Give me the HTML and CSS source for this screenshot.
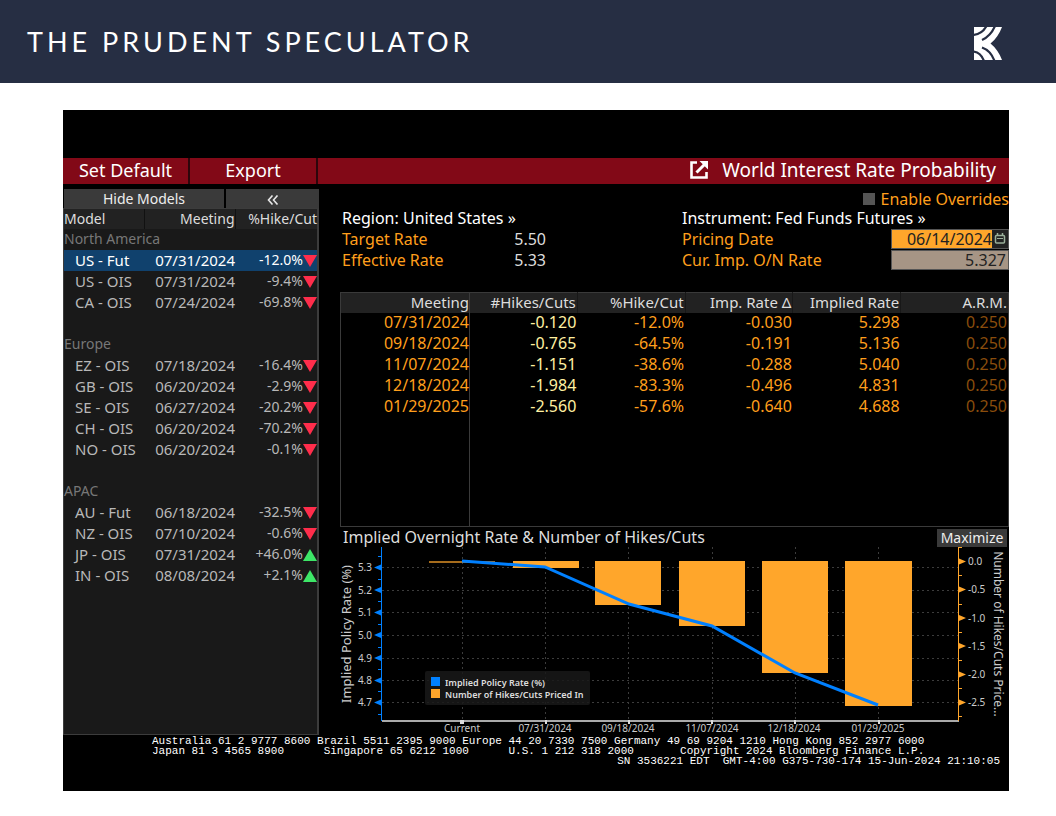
FILE: index.html
```html
<!DOCTYPE html>
<html lang="en">
<head>
<meta charset="utf-8">
<title>The Prudent Speculator</title>
<link rel="stylesheet" href="styles.css">
</head>
<body>
<header class="masthead">
  <h1 class="masthead-title">THE PRUDENT SPECULATOR</h1>
  <svg class="logo" viewBox="0 0 28 33" role="img" aria-label="Kovitz">
    <path fill="#fff" d="M0 0H28C25.500 6.500 22 12 16.500 16.500C22 21 25.500 26.500 28 33H0Z"/>
    <g fill="none" stroke="#262e43" stroke-width="2.200">
      <path d="M-1 8C5 7.500 9.500 4.500 12.500-1"/>
      <path d="M8 13C13.500 10.500 18 6 21-1"/>
      <path d="M-1 24.500C4 25 8 28.500 10 34"/>
      <path d="M8 20.500C13.500 22.500 18 27 20.500 34"/>
    </g>
  </svg>
</header>
<main class="terminal">
  <nav class="toolbar">
    <button class="tool tool-default">Set Default</button>
    <button class="tool tool-export">Export</button>
    <div class="tool-title">
      <svg class="popout" viewBox="0 0 18 18" aria-hidden="true"><path d="M7 1.500H1.500V16.500H16.500V11" fill="none" stroke="#fff" stroke-width="2.600"/><path d="M6.500 11.500L15 3" stroke="#fff" stroke-width="3"/><path d="M9.500 0H18V8.500Z" fill="#fff"/></svg>
      <h2>World Interest Rate Probability</h2>
    </div>
  </nav>
  <div class="workspace">
    <aside class="models">
      <div class="models-actions">
        <button class="hide-models">Hide Models</button>
        <button class="collapse" aria-label="Collapse"><svg viewBox="0 0 12 10" aria-hidden="true"><path d="M5.500 0.500L1.500 5L5.500 9.500M10.500 0.500L6.500 5L10.500 9.500" fill="none" stroke="#e6e6e6" stroke-width="1.600"/></svg></button>
      </div>
      <div class="models-list">
        <table class="models-table">
          <colgroup><col class="c-model"><col class="c-date"><col class="c-pct"><col class="c-dir"></colgroup>
          <thead><tr><th>Model</th><th>Meeting</th><th colspan="2">%Hike/Cut</th></tr></thead>
          <tbody>
            <tr class="group"><th colspan="4">North America</th></tr>
            <tr class="selected"><td>US - Fut</td><td>07/31/2024</td><td>-12.0%</td><td><i class="down"></i></td></tr>
            <tr><td>US - OIS</td><td>07/31/2024</td><td>-9.4%</td><td><i class="down"></i></td></tr>
            <tr><td>CA - OIS</td><td>07/24/2024</td><td>-69.8%</td><td><i class="down"></i></td></tr>
            <tr><td colspan="4"></td></tr>
            <tr class="group"><th colspan="4">Europe</th></tr>
            <tr><td>EZ - OIS</td><td>07/18/2024</td><td>-16.4%</td><td><i class="down"></i></td></tr>
            <tr><td>GB - OIS</td><td>06/20/2024</td><td>-2.9%</td><td><i class="down"></i></td></tr>
            <tr><td>SE - OIS</td><td>06/27/2024</td><td>-20.2%</td><td><i class="down"></i></td></tr>
            <tr><td>CH - OIS</td><td>06/20/2024</td><td>-70.2%</td><td><i class="down"></i></td></tr>
            <tr><td>NO - OIS</td><td>06/20/2024</td><td>-0.1%</td><td><i class="down"></i></td></tr>
            <tr><td colspan="4"></td></tr>
            <tr class="group"><th colspan="4">APAC</th></tr>
            <tr><td>AU - Fut</td><td>06/18/2024</td><td>-32.5%</td><td><i class="down"></i></td></tr>
            <tr><td>NZ - OIS</td><td>07/10/2024</td><td>-0.6%</td><td><i class="down"></i></td></tr>
            <tr><td>JP - OIS</td><td>07/31/2024</td><td>+46.0%</td><td><i class="up"></i></td></tr>
            <tr><td>IN - OIS</td><td>08/08/2024</td><td>+2.1%</td><td><i class="up"></i></td></tr>
          </tbody>
        </table>
      </div>
    </aside>
    <section class="detail">
      <div class="overrides"><input type="checkbox" id="overrides"><label for="overrides">Enable Overrides</label></div>
      <div class="info">
        <div class="info-block">
          <button class="picker">Region: United States »</button>
          <div class="fact"><span>Target Rate</span><output>5.50</output></div>
          <div class="fact"><span>Effective Rate</span><output>5.33</output></div>
        </div>
        <div class="info-block">
          <button class="picker">Instrument: Fed Funds Futures »</button>
          <div class="field"><label for="pricing">Pricing Date</label>
            <span class="control"><input class="date" id="pricing" type="text" value="06/14/2024"><button class="calendar" aria-label="Choose date"><svg viewBox="0 0 12 14" aria-hidden="true"><path d="M3.500 1V4M8.500 1V4" stroke="#9ab09a" stroke-width="1.500"/><rect x="1.500" y="3.500" width="9" height="7.500" rx="1" fill="#222" stroke="#9ab09a" stroke-width="1.500"/><path d="M3 6.500H9" stroke="#9ab09a"/></svg></button></span></div>
          <div class="field"><label for="rate">Cur. Imp. O/N Rate</label>
            <span class="control"><input class="rate" id="rate" type="text" value="5.327" readonly></span></div>
        </div>
      </div>
      <table class="meetings">
        <thead><tr><th>Meeting</th><th>#Hikes/Cuts</th><th>%Hike/Cut</th><th>Imp. Rate Δ</th><th>Implied Rate</th><th>A.R.M.</th></tr></thead>
        <tbody>
          <tr><td>07/31/2024</td><td>-0.120</td><td>-12.0%</td><td>-0.030</td><td>5.298</td><td>0.250</td></tr>
          <tr><td>09/18/2024</td><td>-0.765</td><td>-64.5%</td><td>-0.191</td><td>5.136</td><td>0.250</td></tr>
          <tr><td>11/07/2024</td><td>-1.151</td><td>-38.6%</td><td>-0.288</td><td>5.040</td><td>0.250</td></tr>
          <tr><td>12/18/2024</td><td>-1.984</td><td>-83.3%</td><td>-0.496</td><td>4.831</td><td>0.250</td></tr>
          <tr><td>01/29/2025</td><td>-2.560</td><td>-57.6%</td><td>-0.640</td><td>4.688</td><td>0.250</td></tr>
          <tr class="filler"><td></td><td></td><td></td><td></td><td></td><td></td></tr>
        </tbody>
      </table>
      <div class="chart-head"><h3>Implied Overnight Rate &amp; Number of Hikes/Cuts</h3><button class="maximize">Maximize</button></div>
      <svg class="chart" viewBox="340 547 669 188" role="img" aria-label="Implied policy rate and number of hikes or cuts by meeting">
        <path class="grid" d="M382 567.500H958M382 590.500H958M382 612.500H958M382 635.500H958M382 658.500H958M382 680.500H958M382 702.500H958M462.500 547V720M545.500 547V720M628.500 547V720M712.500 547V720M795.500 547V720M878.500 547V720"/>
        <g class="bars">
          <rect x="429" y="561" width="66" height="2" opacity=".65"/>
          <rect x="513" y="561" width="66" height="7"/>
          <rect x="595" y="561" width="66" height="44"/>
          <rect x="679" y="561" width="66" height="65"/>
          <rect x="762" y="561" width="66" height="112"/>
          <rect x="845" y="561" width="67" height="145"/>
        </g>
        <rect x="425" y="671" width="165" height="34" rx="2" fill="#191919" fill-opacity=".85"/>
        <rect x="431" y="677" width="9" height="9" fill="#0080ff"/>
        <rect x="431" y="689" width="9" height="9" fill="#ffa62b"/>
        <text class="legend" x="445" y="686">Implied Policy Rate (%)</text>
        <text class="legend" x="445" y="698">Number of Hikes/Cuts Priced In</text>
        <path class="trend" d="M462 561L545 567L629 604L712 626L795 673L878 705"/>
        <path d="M382 721H959" stroke="#aaa" stroke-width="2"/>
        <path d="M460 720h4v4h-4zM545 720h2v4h-2zM628 720h2v4h-2zM711 720h2v4h-2zM794 720h2v4h-2zM878 720h2v4h-2z" fill="#ddd"/>
        <path d="M381.500 547V721M378 556.500h3M378 579.500h3M378 601.500h3M378 624.500h3M378 647.500h3M378 669.500h3M378 691.500h3M378 714.500h3" stroke="#0080ff" fill="none"/>
        <path d="M374 567.500l7-3v6zM374 590l7-3v6zM374 612.500l7-3v6zM374 635l7-3v6zM374 658l7-3v6zM374 680.500l7-3v6zM374 702.500l7-3v6z" fill="#0080ff"/>
        <path d="M958.500 547V721M959 547.500h3M959 575.500h3M959 604.500h3M959 632.500h3M959 660.500h3M959 688.500h3M959 716.500h3" stroke="#ffa62b" fill="none"/>
        <path d="M966 561.500l-7-3v6zM966 589.500l-7-3v6zM966 618l-7-3v6zM966 646l-7-3v6zM966 674.500l-7-3v6zM966 702.500l-7-3v6z" fill="#ffa62b"/>
        <g class="tick end"><text x="372" y="571">5.3</text><text x="372" y="594">5.2</text><text x="372" y="616">5.1</text><text x="372" y="639">5.0</text><text x="372" y="662">4.9</text><text x="372" y="684">4.8</text><text x="372" y="706">4.7</text></g>
        <g class="tick"><text x="968" y="565">0.0</text><text x="968" y="593">-0.5</text><text x="968" y="622">-1.0</text><text x="968" y="650">-1.5</text><text x="968" y="678">-2.0</text><text x="968" y="706">-2.5</text></g>
        <g class="tick mid"><text x="462" y="732">Current</text><text x="545" y="732">07/31/2024</text><text x="628" y="732">09/18/2024</text><text x="712" y="732">11/07/2024</text><text x="794" y="732">12/18/2024</text><text x="878" y="732">01/29/2025</text></g>
        <text class="axis axis-rate" transform="translate(351 634) rotate(-90)">Implied Policy Rate (%)</text>
        <text class="axis" transform="translate(994 634) rotate(90)">Number of Hikes/Cuts Price...</text>
      </svg>
    </section>
  </div>
  <footer class="contacts">
    <pre>Australia 61 2 9777 8600 Brazil 5511 2395 9000 Europe 44 20 7330 7500 Germany 49 69 9204 1210 Hong Kong 852 2977 6000
Japan 81 3 4565 8900      Singapore 65 6212 1000      U.S. 1 212 318 2000       Copyright 2024 Bloomberg Finance L.P.</pre>
    <pre class="serial">SN 3536221 EDT  GMT-4:00 G375-730-174 15-Jun-2024 21:10:05</pre>
  </footer>
</main>
</body>
</html>
```
FILE: styles.css
```css
* { box-sizing: border-box; }
body { margin: 0; background: #fff; font-family: "Noto Sans", sans-serif; font-size: 15px; }
h1, h2, h3, pre { margin: 0; font-weight: 400; }
button, input { font: inherit; color: inherit; border: 0; border-radius: 0; padding: 0; margin: 0; background: none; }
table { border-collapse: collapse; border-spacing: 0; table-layout: fixed; width: 100%; }
th, td { padding: 0; font-weight: 400; }

.masthead { display: flex; align-items: center; justify-content: space-between; height: 83px; padding: 0 54px 0 27px; background: #262e43; }
.masthead-title { font-family: Lato, sans-serif; font-size: 27px; line-height: 34px; letter-spacing: 4px; color: #fff; }
.logo { width: 28px; height: 33px; margin-top: 4px; }

.terminal { margin: 27px 47px 25px 63px; padding: 48px 0 25px; background: #000; color: #ddd; }
.toolbar { display: flex; height: 26px; background: #820917; color: #fff; }
.tool { padding-bottom: 2px; border-right: 2px solid #2c060b; font-size: 18px; line-height: 24px; }
.tool-default { width: 127px; }
.tool-export { width: 128px; }
.tool-title { flex: 1; display: flex; justify-content: flex-end; align-items: center; gap: 14px; padding: 0 13px 2px 0; }
.tool-title h2 { font-size: 19px; line-height: 24px; }
.popout { width: 18px; height: 18px; }

.workspace { display: flex; gap: 21px; margin-top: 5px; }
.models { display: flex; flex-direction: column; width: 256px; flex: none; }
.models-actions { display: flex; gap: 2px; height: 19px; padding-left: 1px; }
.hide-models { width: 160px; background: #3a3a3a; color: #eee; font-size: 14px; line-height: 19px; }
.collapse { flex: 1; background: #3a3a3a; }
.collapse svg { width: 12px; height: 10px; }
.models-list { flex: 1; border: 1px solid #3c3c3c; border-right-width: 2px; background: #191919; }
.models-table tr { height: 21px; line-height: 20px; vertical-align: top; }
.models-table thead tr { background: #222; height: 20px; color: #ddd; font-size: 14px; }
.models-table tbody { color: #b8b8b8; }
.c-model { width: 80px; }
.c-date { width: 91px; }
.c-pct { width: 68px; }
.models-table th { text-align: right; }
.models-table thead th:first-child, .models-table tbody th { text-align: left; }
.models-table thead th + th { border-left: 1px solid #111; }
.models-table td { text-align: right; }
.models-table td:first-child { text-align: left; padding-left: 11px; }
.models-table td:nth-child(3) { font-size: 14px; }
.models-table .group { color: #777; font-size: 14px; }
.models-table .selected { background: #10416d; color: #fff; }
.down, .up { display: block; width: 14px; height: 12px; margin: 5px 0 0 auto; background: #ff2d4b; clip-path: polygon(0 0, 100% 0, 50% 100%); }
.up { background: #3de667; clip-path: polygon(50% 0, 100% 100%, 0 100%); }

.detail { flex: 1; min-width: 0; display: flex; flex-direction: column; }
.overrides { display: flex; justify-content: flex-end; align-items: center; gap: 6px; height: 19px; font-size: 16px; color: #ff9f1c; }
.overrides input { appearance: none; width: 12px; height: 12px; background: #555; }
.info { display: grid; grid-template-columns: 340fr 327fr; padding-left: 2px; font-size: 16px; line-height: 20px; color: #ff9f1c; }
.picker { display: block; height: 21px; line-height: 21px; color: #fff; }
.fact { display: flex; justify-content: space-between; width: 204px; height: 21px; }
.fact output { color: #ddd; }
.field { display: flex; justify-content: space-between; height: 21px; }
.control { display: flex; width: 118px; height: 20px; border: 1px solid #555; }
.control input { flex: 1; min-width: 0; width: 100%; line-height: 18px; text-align: right; color: #222; }
.date { background: #ffa62b; }
.control .rate { background: #a69585; padding-right: 2px; }
.calendar { width: 16px; background: #222; line-height: 0; }
.calendar svg { width: 12px; height: 14px; }

.meetings { margin-top: 21px; border: 1px solid #3a3a3a; color: #ff9f1c; }
.meetings tr { height: 21px; font-size: 16px; line-height: 19px; vertical-align: top; }
.meetings thead tr { height: 20px; font-size: 15px; background: #222; color: #ddd; }
.meetings th, .meetings td { text-align: right; padding-right: 1px; }
.meetings th + th { border-left: 1px solid #181818; }
.meetings th:first-child { width: 129px; }
.meetings td:first-child, .meetings th:first-child { border-right: 1px solid #3a3a3a; padding-right: 0; }
.meetings td:nth-child(2) { color: #fff0a0; }
.meetings td:last-child { color: #8a4d0c; }
.meetings .filler { height: 109px; }

.chart-head { display: flex; justify-content: space-between; height: 20px; line-height: 20px; padding: 0 2px 0 3px; }
.chart-head h3 { font-size: 16px; color: #ddd; }
.maximize { width: 70px; height: 18px; margin-top: 2px; font-size: 14px; line-height: 18px; background: #3a3a3a; color: #eee; }
.chart { display: block; width: 100%; height: auto; overflow: visible; }
.grid { fill: none; stroke: #3c3c3c; stroke-dasharray: 2 3; }
.bars { fill: #ffa62b; }
.trend { fill: none; stroke: #0080ff; stroke-width: 3; }
.legend { font-size: 9px; font-weight: 600; fill: #ddd; }
.tick { font-size: 10px; fill: #ccc; }
.end { text-anchor: end; }
.mid { text-anchor: middle; }
.axis { font-size: 12px; fill: #ccc; text-anchor: middle; }
.axis-rate { font-size: 13px; }

.contacts { margin-top: 1px; color: #fff; }
.contacts pre { padding-left: 89px; font-family: "Liberation Mono", monospace; font-size: 11px; line-height: 10px; }
.contacts .serial { padding: 0 9px 0 0; text-align: right; }
```
